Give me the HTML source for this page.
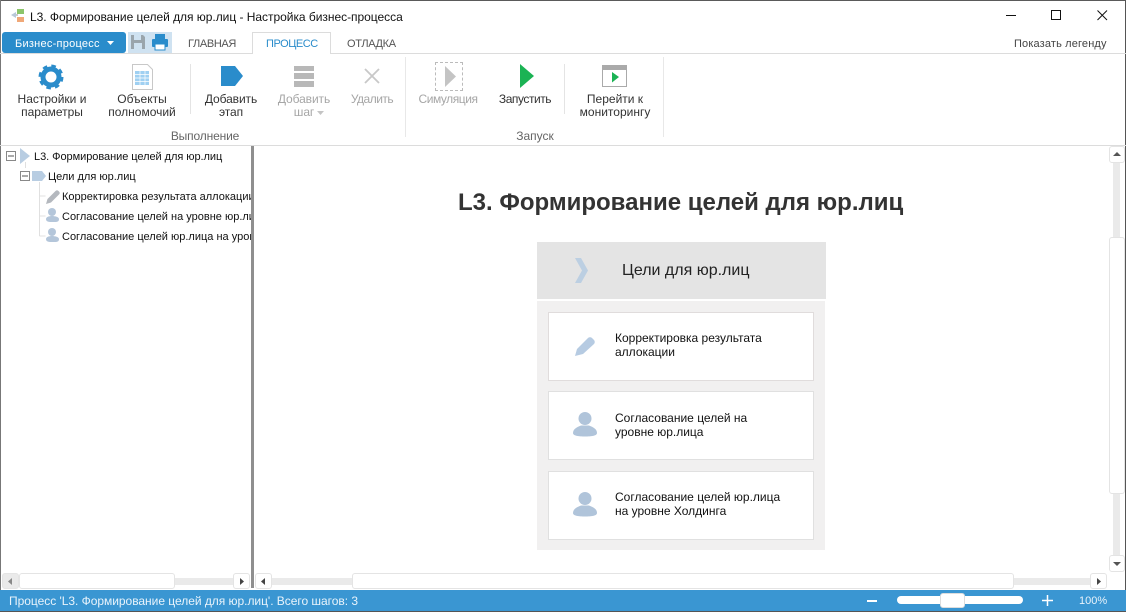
<!DOCTYPE html>
<html><head><meta charset="utf-8"><style>
html,body{margin:0;padding:0;background:#fff}
#w{position:relative;width:1126px;height:612px;overflow:hidden;background:#fff;font-family:"Liberation Sans",sans-serif;font-size:11px;color:#333}
#w div,#w svg{position:absolute}
.t{white-space:nowrap}
.c{text-align:center;line-height:13px;white-space:nowrap;font-size:12px}
.g{color:#a6a6a6}
.sb{background:#eaeaea}
.btn{background:#fff;border:1px solid #e4e4e4;border-radius:3px;box-sizing:border-box}
</style></head><body><div id="w">
<div style="left:0;top:0;width:1126px;height:1px;background:#5a5a5a"></div>
<div style="left:0;top:0;width:1px;height:612px;background:#777"></div>
<div style="right:0;top:0;width:1px;height:612px;background:#555"></div>

<svg style="left:10px;top:7px" width="16" height="18" viewBox="0 0 16 18"><path d="M1 8l5-3v6z" fill="#b8c8d8"/><rect x="7" y="2" width="7" height="5" fill="#8cc56a"/><rect x="7" y="10" width="7" height="5" fill="#f0a878"/><path d="M6 8h2" stroke="#999"/></svg>
<div class="t" style="left:30px;top:10px;font-size:12px;color:#111;letter-spacing:-.03px">L3. Формирование целей для юр.лиц - Настройка бизнес-процесса</div>

<svg style="left:1000px;top:0" width="126" height="30" viewBox="0 0 126 30"><path d="M6 15.500h10" stroke="#111"/><rect x="51.500" y="10.500" width="9" height="9" fill="none" stroke="#111"/><path d="M97.500 10.500l9.500 9.500M107 10.500l-9.500 9.500" stroke="#111"/></svg>

<div style="left:128px;top:32px;width:44px;height:21px;background:#cfe2f1"></div>
<div style="left:2px;top:32px;width:124px;height:21px;background:#2a8ccb;border-radius:3px"></div>
<div class="t" style="left:15px;top:38px;color:#fff;letter-spacing:.25px">Бизнес-процесс</div>
<svg style="left:107px;top:41px" width="7" height="4"><path d="M0 0h7l-3.500 4z" fill="#fff"/></svg>
<svg style="left:130px;top:34px" width="16" height="16" viewBox="0 0 16 16"><path d="M1 1h12l2 2v12H1z" fill="#9aa5ac"/><rect x="4" y="1" width="7" height="5" fill="#cfe2f1"/><rect x="4" y="9" width="8" height="6" fill="#cfe2f1"/></svg>
<svg style="left:152px;top:34px" width="16" height="17" viewBox="0 0 16 17"><rect x="3" y="0" width="10" height="5" fill="#2a8ccb"/><rect x="0" y="5" width="16" height="8" rx="1" fill="#2a8ccb"/><rect x="3" y="10" width="10" height="6" fill="#fff" stroke="#2a8ccb"/></svg>

<div style="left:0;top:53px;width:1126px;height:1px;background:#dcdcdc"></div>
<div style="left:252px;top:32px;width:79px;height:22px;background:#fff;border:1px solid #dcdcdc;border-bottom:0;box-sizing:border-box"></div>
<div class="t" style="left:188px;top:38px;color:#555;letter-spacing:-.35px">ГЛАВНАЯ</div>
<div class="t" style="left:266px;top:38px;color:#2a8ccb;letter-spacing:-.45px">ПРОЦЕСС</div>
<div class="t" style="left:347px;top:38px;color:#555;letter-spacing:-.35px">ОТЛАДКА</div>
<div class="t" style="left:1014px;top:38px;color:#444;letter-spacing:.15px">Показать легенду</div>

<svg style="left:38px;top:64px" width="26" height="26" viewBox="0 0 26 26"><circle cx="13" cy="13" r="8" fill="none" stroke="#2a8ccb" stroke-width="5"/><circle cx="13" cy="13" r="11" fill="none" stroke="#2a8ccb" stroke-width="3" stroke-dasharray="4.500 4.140"/></svg>
<div class="c" style="left:2px;width:100px;top:93px">Настройки и<br>параметры</div>
<svg style="left:132px;top:64px" width="21" height="26" viewBox="0 0 21 26"><path d="M.5.500h15l5 5v20H.5z" fill="#fff" stroke="#c8c8c8"/><path d="M3 7h14v14H3z" fill="#9fd0f2"/><path d="M3 10.500h14M3 14h14M3 17.500h14M8 7v14M13 7v14" stroke="#fff" stroke-width=".7"/></svg>
<div class="c" style="left:92px;width:100px;top:93px">Объекты<br>полномочий</div>
<div style="left:190px;top:64px;width:1px;height:50px;background:#e4e4e4"></div>
<svg style="left:221px;top:66px" width="22" height="20"><path d="M0 0h14l8 10-8 10H0z" fill="#2a8ccb"/></svg>
<div class="c" style="left:181px;width:100px;top:93px;letter-spacing:-.1px">Добавить<br>этап</div>
<svg style="left:294px;top:66px" width="20" height="21"><rect width="20" height="5" fill="#b8b8b8"/><rect y="7" width="20" height="6" fill="#b8b8b8"/><rect y="15" width="20" height="6" fill="#b8b8b8"/></svg>
<div class="c g" style="left:254px;width:100px;top:93px;letter-spacing:-.1px">Добавить<br>шаг</div>
<svg style="left:317px;top:111px" width="7" height="4"><path d="M0 0h7l-3.500 4z" fill="#c4c4c4"/></svg>
<svg style="left:364px;top:68px" width="16" height="16"><path d="M1 1l14 14M15 1L1 15" stroke="#c8c8c8" stroke-width="1.800"/></svg>
<div class="c g" style="left:322px;width:100px;top:93px;letter-spacing:-.5px">Удалить</div>
<div class="c" style="left:155px;width:100px;top:130px;color:#666;letter-spacing:-.15px">Выполнение</div>
<div style="left:405px;top:57px;width:1px;height:80px;background:#e8e8e8"></div>

<div style="left:435px;top:62px;width:28px;height:29px;border:1px dashed #bbb;box-sizing:border-box"></div>
<svg style="left:445px;top:66px" width="11" height="21"><path d="M0 0l11 10.500L0 21z" fill="#c4c4c4"/></svg>
<div class="c g" style="left:398px;width:100px;top:93px;letter-spacing:-.45px">Симуляция</div>
<svg style="left:520px;top:64px" width="14" height="24"><path d="M0 0l14 12L0 24z" fill="#1bb354"/></svg>
<div class="c" style="left:475px;width:100px;top:93px;letter-spacing:-.45px">Запустить</div>
<div style="left:564px;top:64px;width:1px;height:50px;background:#e4e4e4"></div>
<svg style="left:602px;top:65px" width="25" height="22"><rect x=".5" y=".5" width="24" height="21" fill="#fff" stroke="#aaa"/><rect width="25" height="5" fill="#aaa"/><path d="M10 7l7 5-7 5.500z" fill="#1bb354"/></svg>
<div class="c" style="left:565px;width:100px;top:93px">Перейти к<br>мониторингу</div>
<div class="c" style="left:485px;width:100px;top:130px;color:#666">Запуск</div>
<div style="left:663px;top:57px;width:1px;height:80px;background:#e8e8e8"></div>

<div style="left:0;top:145px;width:1126px;height:1px;background:#dcdcdc"></div>
<div style="left:251px;top:146px;width:3px;height:442px;background:#8f8f8f"></div>

<svg style="left:0;top:146px" width="62" height="100"><g fill="none" stroke="#e0e0e0"><path d="M25.500 16v6M39.500 36v54M39.500 50h6M39.500 70h6M39.500 90h6"/></g><g fill="#fff" stroke="#888"><rect x="6.500" y="5.500" width="9" height="9"/><rect x="20.500" y="25.500" width="9" height="9"/></g><path d="M8 10h6M22 30h6" stroke="#555"/><path d="M20 2l10 8-10 8z" fill="#b8cde2"/><path d="M32 25h10l4 5-4 5H32z" fill="#b8cde2"/><path d="M46 58l1.500-5 8-8c1-1 2-1 3 0l.5.5c1 1 1 2 0 3l-8 8z" fill="#b4b8be"/><g fill="#b4c6da"><circle cx="52" cy="66" r="4"/><path d="M46 73c0-2 3-3 6-3s7 1 7 3c0 3-2 3-6 3s-7 0-7-3z"/><circle cx="52" cy="86" r="4"/><path d="M46 93c0-2 3-3 6-3s7 1 7 3c0 3-2 3-6 3s-7 0-7-3z"/></g></svg>
<div class="t" style="left:34px;top:151px;color:#111;letter-spacing:-.05px">L3. Формирование целей для юр.лиц</div>
<div class="t" style="left:48px;top:171px;color:#111">Цели для юр.лиц</div>
<div class="t" style="left:62px;top:191px;width:189px;overflow:hidden;color:#111">Корректировка результата аллокации</div>
<div class="t" style="left:62px;top:211px;width:189px;overflow:hidden;color:#111">Согласование целей на уровне юр.лица</div>
<div class="t" style="left:62px;top:231px;width:189px;overflow:hidden;color:#111">Согласование целей юр.лица на уровне Холдинга</div>

<div class="t" style="left:458px;top:189px;font-size:24px;font-weight:bold;color:#333">L3. Формирование целей для юр.лиц</div>

<div style="left:537px;top:242px;width:289px;height:57px;background:#e4e4e4"></div>
<svg style="left:574px;top:258px" width="15" height="25"><path d="M1 0h6l7 12.500L7 25H1l7-12.500z" fill="#bccfe2"/></svg>
<div class="t" style="left:622px;top:262px;font-size:16px;color:#222">Цели для юр.лиц</div>
<div style="left:537px;top:301px;width:288px;height:249px;background:#f1f0f0"></div>

<div style="left:548px;top:312px;width:266px;height:69px;background:#fff;border:1px solid #e0dcdc;box-sizing:border-box"></div>
<svg style="left:575px;top:337px" width="20" height="20"><path d="M0 19L2 12 13 1c1-1 3-1 4 0l2 2c1 1 1 3 0 4L8 17z" fill="#b6cbe2"/></svg>
<div class="t" style="left:615px;top:331px;font-size:12px;line-height:14px;color:#111">Корректировка результата<br>аллокации</div>

<div style="left:548px;top:391px;width:266px;height:69px;background:#fff;border:1px solid #e0e0e0;box-sizing:border-box"></div>
<svg style="left:573px;top:412px" width="24" height="25"><circle cx="12" cy="6.500" r="6.500" fill="#b0c4da"/><path d="M0 21C0 17 4 15 8 13.500h8C20 15 24 17 24 21c0 3-6 3.500-12 3.500S0 24 0 21z" fill="#b0c4da"/></svg>
<div class="t" style="left:615px;top:411px;font-size:12px;line-height:14px;color:#111">Согласование целей на<br>уровне юр.лица</div>

<div style="left:548px;top:471px;width:266px;height:69px;background:#fff;border:1px solid #e0e0e0;box-sizing:border-box"></div>
<svg style="left:573px;top:492px" width="24" height="25"><circle cx="12" cy="6.500" r="6.500" fill="#b0c4da"/><path d="M0 21C0 17 4 15 8 13.500h8C20 15 24 17 24 21c0 3-6 3.500-12 3.500S0 24 0 21z" fill="#b0c4da"/></svg>
<div class="t" style="left:615px;top:490px;font-size:12px;line-height:14px;color:#111">Согласование целей юр.лица<br>на уровне Холдинга</div>

<div class="sb" style="left:1113px;top:163px;width:7px;height:392px"></div>
<div class="btn" style="left:1109px;top:146px;width:16px;height:17px"></div>
<svg style="left:1113px;top:152px" width="8" height="4"><path d="M4 0l4 4H0z" fill="#555"/></svg>
<div class="btn" style="left:1109px;top:237px;width:16px;height:257px"></div>
<div class="btn" style="left:1109px;top:555px;width:16px;height:17px"></div>
<svg style="left:1113px;top:562px" width="8" height="4"><path d="M0 0h8L4 4z" fill="#555"/></svg>

<div class="sb" style="left:2px;top:578px;width:246px;height:7px"></div>
<div class="btn" style="left:2px;top:573px;width:17px;height:16px;background:#eaeaea"></div>
<svg style="left:8px;top:578px" width="4" height="7"><path d="M4 0v7L0 3.500z" fill="#888"/></svg>
<div class="btn" style="left:19px;top:573px;width:156px;height:16px"></div>
<div class="btn" style="left:233px;top:573px;width:17px;height:16px"></div>
<svg style="left:240px;top:578px" width="4" height="7"><path d="M0 0v7l4-3.500z" fill="#444"/></svg>

<div class="sb" style="left:270px;top:578px;width:830px;height:7px"></div>
<div class="btn" style="left:255px;top:573px;width:17px;height:16px"></div>
<svg style="left:261px;top:578px" width="4" height="7"><path d="M4 0v7L0 3.500z" fill="#444"/></svg>
<div class="btn" style="left:352px;top:573px;width:662px;height:16px"></div>
<div class="btn" style="left:1090px;top:573px;width:17px;height:16px"></div>
<svg style="left:1097px;top:578px" width="4" height="7"><path d="M0 0v7l4-3.500z" fill="#444"/></svg>

<div style="left:0;top:590px;width:1126px;height:21px;background:#3a96d2"></div>
<div style="left:0;top:611px;width:1126px;height:1px;background:#555"></div>
<div class="t" style="left:9px;top:594px;font-size:12px;color:#e8f3fb;letter-spacing:-.03px">Процесс 'L3. Формирование целей для юр.лиц'. Всего шагов: 3</div>
<div style="left:867px;top:600px;width:10px;height:2px;background:#fff"></div>
<div style="left:897px;top:596px;width:126px;height:8px;background:#fff;border-radius:4px"></div>
<div style="left:940px;top:593px;width:25px;height:15px;background:#fff;border:1px solid #ddd;border-radius:3px;box-sizing:border-box"></div>
<svg style="left:1042px;top:595px" width="11" height="11"><path d="M0 5.500h11M5.500 0v11" stroke="#fff" stroke-width="1.500"/></svg>
<div class="t" style="left:1079px;top:595px;font-size:11px;color:#e8f3fb">100%</div>
</div></body></html>
